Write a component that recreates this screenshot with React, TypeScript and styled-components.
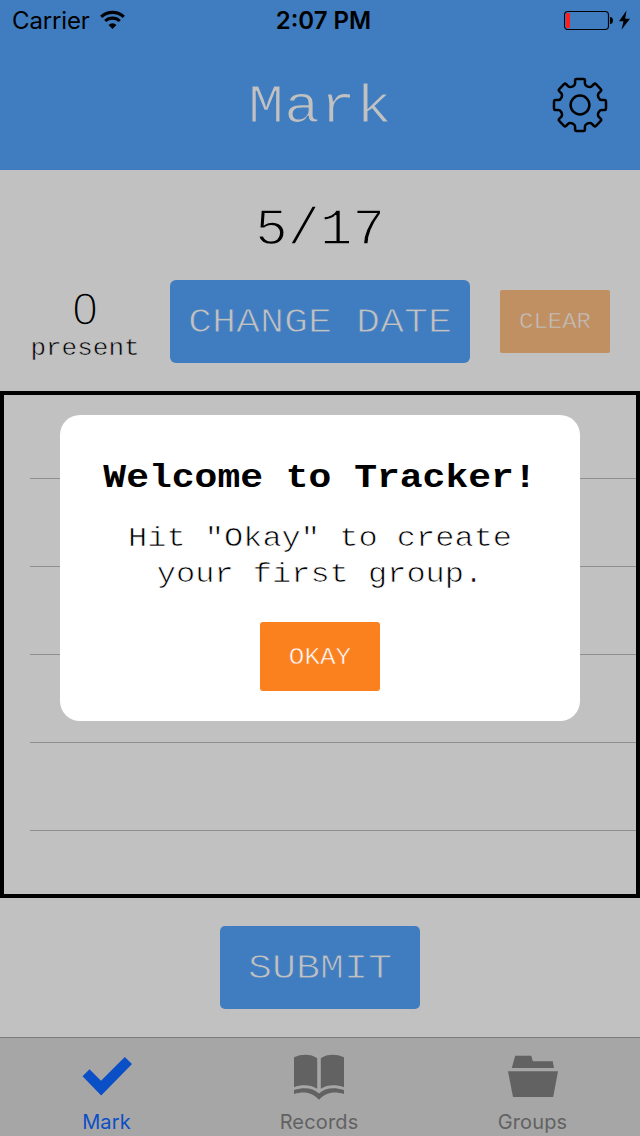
import React from "react";
import styled, { createGlobalStyle } from "styled-components";

const blue = "#3f7dc0";
const grey = "#c1c1c1";
const mono = `"Courier New", "Liberation Mono", monospace`;
const sans = `Inter, "Liberation Sans", sans-serif`;

const GlobalStyle = createGlobalStyle`
  *, *::before, *::after { box-sizing: border-box; }
  body { margin: 0; background: ${grey}; }
  button { border: 0; padding: 0; margin: 0; }
`;

const Screen = styled.div`
  position: relative;
  width: 640px;
  height: 1136px;
  display: flex;
  flex-direction: column;
  overflow: hidden;
  background: ${grey};
  color: #000;
  font-family: ${mono};
`;

/* Typewriter lettering: low and thin, trimmed by an outline in the surface colour. */
const Type = styled.span<{ $on?: string; $trim?: number; $squash?: number }>`
  display: inline-block;
  transform: scaleY(${(p) => p.$squash ?? 0.89});
  transform-origin: 50% 74%;
  -webkit-text-stroke: ${(p) => (p.$on ? `${p.$trim ?? 1}px ${p.$on}` : "0")};
`;

const Header = styled.header`
  height: 170px;
  background: ${blue};
`;

const StatusBar = styled.div`
  height: 40px;
  padding: 1px 9px 0 12px;
  display: grid;
  grid-template-columns: 1fr auto 1fr;
  align-items: center;
  font-family: ${sans};
  font-size: 24px;
  line-height: 40px;
`;

const StatusGroup = styled.div<{ $end?: boolean }>`
  display: flex;
  align-items: center;
  gap: 10px;
  justify-content: ${(p) => (p.$end ? "flex-end" : "flex-start")};
  svg { margin-top: ${(p) => (p.$end ? -3 : -2)}px; }
`;

const Carrier = styled.span`
  letter-spacing: -0.15px;
`;

const Clock = styled.span`
  padding-left: 4px;
  font-weight: 600;
`;

const TitleBar = styled.div`
  height: 130px;
  padding: 0 32px;
  display: grid;
  grid-template-columns: 56px 1fr 56px;
  align-items: center;
`;

const Title = styled.h1`
  grid-column: 2;
  margin: 0;
  padding-top: 1px;
  text-align: center;
  font-size: 60px;
  font-weight: 400;
  line-height: 68px;
  color: ${grey};
`;

const DateLabel = styled.div`
  height: 110px;
  padding-top: 7px;
  text-align: center;
  font-size: 54px;
  line-height: 103px;
`;

const Controls = styled.div`
  height: 83px;
  padding: 0 30px;
  display: grid;
  grid-template-columns: 110px 300px 110px;
  column-gap: 30px;
  align-items: center;
`;

const Counter = styled.div`
  height: 83px;
  padding-top: 4px;
  display: flex;
  flex-direction: column;
  align-items: center;
`;

/* The sans face has an open zero, without the dot of the monospaced one. */
const Count = styled.span`
  font-family: "Liberation Sans", sans-serif;
  font-size: 46px;
  line-height: 50px;
`;

const CountLabel = styled.span`
  font-size: 26px;
  line-height: 29px;
`;

const Button = styled.button<{ $w: number; $h: number; $size: number; $bg: string; $fg: string; $r: number }>`
  width: ${(p) => p.$w}px;
  height: ${(p) => p.$h}px;
  border-radius: ${(p) => p.$r}px;
  background: ${(p) => p.$bg};
  color: ${(p) => p.$fg};
  font-family: ${mono};
  font-size: ${(p) => p.$size}px;
  white-space: nowrap;
`;

const Table = styled.div`
  height: 507px;
  margin-top: 28px;
  border: 4px solid #000;
  padding-left: 26px;
`;

const TableRow = styled.div`
  height: 88px;
  border-bottom: 1px solid #8f8f91;
  &:first-child { height: 84px; }
`;

const SubmitArea = styled.div`
  flex: 1;
  display: flex;
  align-items: center;
  justify-content: center;
`;

const TabBar = styled.nav`
  height: 99px;
  border-top: 1px solid #7c7c7c;
  background: #a6a6a6;
  display: grid;
  grid-template-columns: 213px 212px 215px;
`;

const Tab = styled.div<{ $active?: boolean }>`
  display: flex;
  flex-direction: column;
  align-items: center;
  padding-top: 14px;
  gap: 7px;
  color: ${(p) => (p.$active ? "#0a4fc6" : "#626262")};
  font-family: ${sans};
  font-size: 20px;
  line-height: 26px;
  letter-spacing: 0.15px;
`;

const Overlay = styled.div`
  position: absolute;
  inset: 0;
  display: flex;
  align-items: center;
  justify-content: center;
`;

const Dialog = styled.section`
  width: 520px;
  height: 306px;
  padding-top: 40px;
  border-radius: 20px;
  background: #fff;
  display: flex;
  flex-direction: column;
  align-items: center;
  text-align: center;
`;

const DialogTitle = styled.h2`
  margin: 0;
  font-size: 38px;
  font-weight: 700;
  line-height: 43px;
`;

const DialogText = styled.p`
  margin: 22px 0 30px;
  display: flex;
  flex-direction: column;
  align-items: center;
  font-size: 32px;
  line-height: 36px;
`;

function WifiIcon() {
  return (
    <svg width="26" height="20" viewBox="0 0 26 20" fill="none" stroke="#000" strokeWidth="3.1">
      <path d="M1.2 6.9A16.4 16.4 0 0 1 23.8 6.9" />
      <path d="M5.2 11A10.6 10.6 0 0 1 19.8 11" />
      <path d="M12.5 19L8.5 14.9A5.8 5.8 0 0 1 16.5 14.9Z" fill="#000" stroke="none" />
    </svg>
  );
}

function BatteryIcon() {
  return (
    <svg width="67" height="22" viewBox="0 0 67 22">
      <rect x="0.5" y="2.5" width="44" height="18" rx="3.5" fill="none" stroke="#000" strokeWidth="1.2" />
      <rect x="2" y="4" width="4" height="15" rx="1" fill="#fb1f22" />
      <path d="M46 8V15C50 15 50 8 46 8Z" fill="#000" />
      <path d="M62.5 1.5L55 12.2H59.5L57.5 20.8L66 9.8H61.2Z" fill="#000" />
    </svg>
  );
}

function gearPath() {
  const parts: string[] = [];
  for (let i = 0; i < 8; i++) {
    const a = (i * Math.PI) / 4;
    const p = (u: number, r: number) =>
      `${(28 + u * Math.cos(a) + r * Math.sin(a)).toFixed(2)} ${(28 + u * Math.sin(a) - r * Math.cos(a)).toFixed(2)}`;
    parts.push(
      `${i ? "L" : "M"}${p(-7.6, 18.4)}`,
      `Q${p(-4.9, 19.8)} ${p(-4.9, 21.4)}`,
      `L${p(-4.9, 24.8)}`,
      `Q${p(-4.8, 26)} ${p(-3.4, 26)}`,
      `L${p(3.4, 26)}`,
      `Q${p(4.8, 26)} ${p(4.9, 24.8)}`,
      `L${p(4.9, 21.4)}`,
      `Q${p(4.9, 19.8)} ${p(7.6, 18.4)}`
    );
  }
  return parts.join("") + "Z";
}

function GearIcon() {
  return (
    <svg width="56" height="56" viewBox="0 0 56 56" fill="none" stroke="#000" strokeWidth="2.5" strokeLinejoin="round">
      <path d={gearPath()} />
      <circle cx="28" cy="28" r="9.4" />
    </svg>
  );
}

function CheckIcon() {
  return (
    <svg width="50" height="50" viewBox="0 0 50 50" fill="currentColor">
      <path d="M0.5 24.2L7.5 17.2L19 28.7L42.8 5L50 12L19.2 43.5Z" />
    </svg>
  );
}

function BookIcon() {
  return (
    <svg width="50" height="50" viewBox="0 0 50 50" fill="currentColor">
      <path d="M0 5.2C8 1.8 17 1.8 23.2 6.2V36.8C16.5 32.5 8 32.4 0 35.2Z" />
      <path d="M50 5.2C42 1.8 33 1.8 26.8 6.2V36.8C33.5 32.5 42 32.4 50 35.2Z" />
      <path d="M0 38C10 34.7 19 35.7 25 41.5C31 35.7 40 34.7 50 38V42C40 39.3 32 40 25 47.8C18 40 10 39.3 0 42Z" />
    </svg>
  );
}

function FolderIcon() {
  return (
    <svg width="50" height="50" viewBox="0 0 50 50" fill="currentColor">
      <path d="M7.2 3.7H23.3L24.8 9.2H44.7L46 16H3.8Z" />
      <path d="M0 19.3H50L45.2 45H5Z" />
    </svg>
  );
}

export default function App() {
  return (
    <>
      <GlobalStyle />
      <Screen>
        <Header>
          <StatusBar>
            <StatusGroup>
              <Carrier>Carrier</Carrier>
              <WifiIcon />
            </StatusGroup>
            <Clock>2:07 PM</Clock>
            <StatusGroup $end>
              <BatteryIcon />
            </StatusGroup>
          </StatusBar>
          <TitleBar>
            <Title><Type $on={blue} $trim={1.4}>Mark</Type></Title>
            <GearIcon />
          </TitleBar>
        </Header>
        <DateLabel><Type $on={grey} $trim={1.5} $squash={0.95}>5/17</Type></DateLabel>
        <Controls>
          <Counter>
            <Count><Type $on={grey} $trim={1.7} $squash={1}>0</Type></Count>
            <CountLabel><Type $on={grey} $trim={0.6}>present</Type></CountLabel>
          </Counter>
          <Button $w={300} $h={83} $size={40} $bg={blue} $fg={grey} $r={6}>
            <Type $on={blue} $trim={1}>CHANGE DATE</Type>
          </Button>
          <Button $w={110} $h={63} $size={24} $bg="#c19062" $fg={grey} $r={2}>
            <Type $on="#c19062" $trim={0.6}>CLEAR</Type>
          </Button>
        </Controls>
        <Table>
          {[0, 1, 2, 3, 4].map((row) => (
            <TableRow key={row} />
          ))}
        </Table>
        <SubmitArea>
          <Button $w={200} $h={83} $size={40} $bg={blue} $fg={grey} $r={5}>
            <Type $on={blue} $trim={1}>SUBMIT</Type>
          </Button>
        </SubmitArea>
        <TabBar>
          <Tab $active>
            <CheckIcon />
            Mark
          </Tab>
          <Tab>
            <BookIcon />
            Records
          </Tab>
          <Tab>
            <FolderIcon />
            Groups
          </Tab>
        </TabBar>
        <Overlay>
          <Dialog>
            <DialogTitle><Type>Welcome to Tracker!</Type></DialogTitle>
            <DialogText>
              <Type $on="#fff" $trim={0.8}>Hit "Okay" to create</Type>
              <Type $on="#fff" $trim={0.8}>your first group.</Type>
            </DialogText>
            <Button $w={120} $h={69} $size={26} $bg="#fb801e" $fg="#fff" $r={3}>
              <Type $on="#fb801e" $trim={0.6}>OKAY</Type>
            </Button>
          </Dialog>
        </Overlay>
      </Screen>
    </>
  );
}
